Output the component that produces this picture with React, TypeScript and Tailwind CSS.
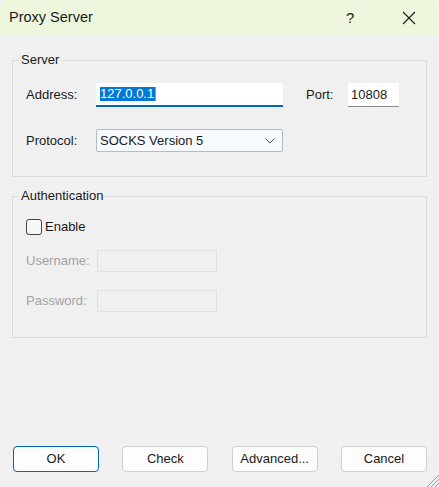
import React from "react";

const font = { fontFamily: '"Liberation Sans", Arial, sans-serif' };

function GripIcon() {
  // little resize grip in the window's bottom-right corner
  return (
    <svg width="14" height="14" viewBox="0 0 14 14" className="absolute bottom-0 right-0">
      <path d="M14 2 L2 14 M14 6 L6 14 M14 10 L10 14" stroke="#9a9a9a" strokeWidth="1" fill="none" />
    </svg>
  );
}

function Button({ label, primary }: { label: string; primary?: boolean }) {
  return (
    <button
      className={
        primary
          ? "w-[86px] h-[26px] rounded-[4px] border border-[#0067c0] bg-[#fdfdfd] text-[13px] text-[#1a1a1a]"
          : "w-[86px] h-[26px] rounded-[4px] border border-[#d0d0d0] bg-[#fdfdfd] text-[13px] text-[#1a1a1a]"
      }
    >
      {label}
    </button>
  );
}

export default function App() {
  return (
    <div className="w-[439px] h-[487px] bg-[#f3f3f3]" style={font}>
      <div className="relative flex flex-col w-full h-full rounded-t-[8px] overflow-hidden bg-[#f0f0f0]">
        {/* title bar */}
        <div className="flex items-center h-[36px] bg-[#eef7dd] pl-[9px] shrink-0">
          <span className="text-[14.5px] text-[#1b1b1b] flex-1">Proxy Server</span>
          <span className="text-[15px] text-[#222] w-[12px] mr-[44px]">?</span>
          <svg width="14" height="14" viewBox="0 0 14 14" className="mr-[23px]">
            <path d="M1 1 L13 13 M13 1 L1 13" stroke="#1b1b1b" strokeWidth="1.1" fill="none" />
          </svg>
        </div>

        {/* Server group */}
        <fieldset className="mx-[12px] mt-[15px] border border-[#dcdcdc] pl-[13px] pt-[14px] pb-[24px] w-[415px]">
          <legend className="-ml-[7px] px-[2px] text-[13px] leading-[18px] text-[#1a1a1a]">Server</legend>
          <div className="flex items-center h-[24px]">
            <span className="w-[70px] text-[13px] text-[#1a1a1a]">Address:</span>
            <div className="w-[187px] h-[24px] bg-white border-b-2 border-[#0067c0] flex items-center pl-[4px]">
              <span className="bg-[#0078d7] text-white text-[13px] leading-[14px] pr-[1px] border-r border-[#f08a24]">
                127.0.0.1
              </span>
            </div>
            <span className="ml-[23px] w-[42px] text-[13px] text-[#1a1a1a]">Port:</span>
            <div className="w-[51px] h-[24px] bg-white border-b border-[#8a8a8a] flex items-center pl-[3px] text-[13px] text-[#1a1a1a]">
              10808
            </div>
          </div>
          <div className="flex items-center h-[23px] mt-[22px]">
            <span className="w-[70px] text-[13px] text-[#1a1a1a]">Protocol:</span>
            <div className="w-[187px] h-[23px] bg-[#f6f9fd] border border-[#a9bdd4] rounded-[2px] flex items-center pl-[3px] pr-[7px] text-[13px] text-[#1a1a1a]">
              <span className="flex-1">SOCKS Version 5</span>
              <svg width="10" height="6" viewBox="0 0 10 6">
                <path d="M0.5 0.5 L5 5 L9.5 0.5" stroke="#555" strokeWidth="1" fill="none" />
              </svg>
            </div>
          </div>
        </fieldset>

        {/* Authentication group */}
        <fieldset className="mx-[12px] mt-[10px] border border-[#dcdcdc] pl-[13px] pt-[14px] pb-[25px] w-[415px]">
          <legend className="-ml-[7px] px-[2px] text-[13px] leading-[18px] text-[#1a1a1a]">Authentication</legend>
          <div className="flex items-center h-[16px]">
            <span className="w-[16px] h-[16px] rounded-[3px] border border-[#444] bg-[#f7f7f7]"></span>
            <span className="ml-[3px] text-[13px] text-[#1a1a1a]">Enable</span>
          </div>
          <div className="flex items-center h-[22px] mt-[15px]">
            <span className="w-[71px] text-[13px] text-[#a3a3a3]">Username:</span>
            <div className="w-[120px] h-[22px] border border-[#e2e2e2] bg-[#f0f0f0]"></div>
          </div>
          <div className="flex items-center h-[22px] mt-[18px]">
            <span className="w-[71px] text-[13px] text-[#a3a3a3]">Password:</span>
            <div className="w-[120px] h-[22px] border border-[#e2e2e2] bg-[#f0f0f0]"></div>
          </div>
        </fieldset>

        {/* dialog buttons */}
        <div className="mt-auto mb-[15px] pl-[13px] pr-[12px] flex justify-between">
          <Button label="OK" primary />
          <Button label="Check" />
          <Button label="Advanced..." />
          <Button label="Cancel" />
        </div>

        <GripIcon />
      </div>
    </div>
  );
}
